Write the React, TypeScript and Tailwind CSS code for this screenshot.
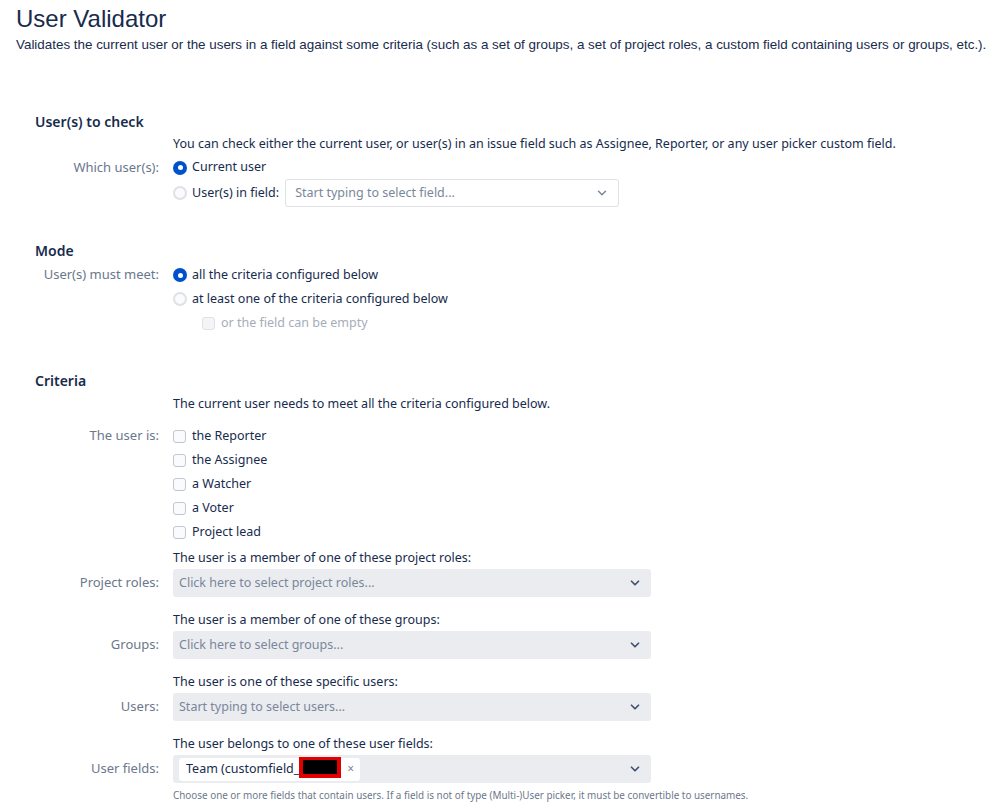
import { ChevronDown } from 'lucide-react';

const body = { fontFamily: '"Noto Sans", "Open Sans", sans-serif' };

function Radio({ checked, label }: { checked?: boolean; label: string }) {
  return (
    <label className="flex items-center gap-[5px] text-[12.5px] text-[#172b4d]">
      {checked ? (
        <span className="w-[14px] h-[14px] rounded-full bg-[#0052cc] flex items-center justify-center">
          <span className="w-[5px] h-[5px] rounded-full bg-white" />
        </span>
      ) : (
        <span className="w-[14px] h-[14px] rounded-full border-2 border-[#dfe1e6] bg-[#fafbfc]" />
      )}
      <span>{label}</span>
    </label>
  );
}

function Checkbox({ label, disabled }: { label: string; disabled?: boolean }) {
  return (
    <label className={`flex items-center gap-[6px] text-[12.5px] ${disabled ? 'text-[#a5adba]' : 'text-[#172b4d]'}`}>
      <span className={`w-[13px] h-[13px] rounded-[3px] border ${disabled ? 'border-[#dfe1e6] bg-[#f4f5f7]' : 'border-[#c1c7d0] bg-[#fafbfc]'}`} />
      <span>{label}</span>
    </label>
  );
}

function Row({ label, children, h = 'h-[24px]' }: { label?: string; children: React.ReactNode; h?: string }) {
  return (
    <div className={`flex items-center ${h}`}>
      <div className="w-[124px] text-right text-[13px] text-[#6b778c] shrink-0">{label}</div>
      <div className="ml-[14px] flex items-center">{children}</div>
    </div>
  );
}

function GreySelect({ placeholder, children }: { placeholder?: string; children?: React.ReactNode }) {
  return (
    <div className="w-[478px] h-[28px] rounded-[3px] bg-[#ebecf0] flex items-center pl-[6px] pr-[9px]">
      <div className="flex-1 flex items-center text-[12.5px] text-[#7a869a]">{children ?? placeholder}</div>
      <ChevronDown size={14} strokeWidth={3} className="text-[#42526e]" />
    </div>
  );
}

function FieldGroup({ desc, label, children, first }: { desc: string; label: string; children: React.ReactNode; first?: boolean }) {
  return (
    <div className={first ? 'mt-[3px]' : 'mt-[12px]'}>
      <Row h="h-[22px]">
        <span className="text-[12.5px] text-[#172b4d]">{desc}</span>
      </Row>
      <Row label={label} h="h-[28px]">
        {children}
      </Row>
    </div>
  );
}

function Header({ children, className = '' }: { children: React.ReactNode; className?: string }) {
  return <div className={`h-[24px] flex items-center text-[14px] font-semibold text-[#172b4d] ${className}`}>{children}</div>;
}

export default function App() {
  return (
    <div className="bg-white min-h-[811px] w-[998px] overflow-hidden">
      <div className="pl-[16px] pt-[5px]" style={{ fontFamily: '"Liberation Sans", Arial, sans-serif' }}>
        <h1 className="text-[24px] leading-[28px] text-[#172b4d]">User Validator</h1>
        <p className="text-[13.4px] leading-[18px] mt-[3px] text-[#172b4d] whitespace-nowrap">
          Validates the current user or the users in a field against some criteria (such as a set of groups, a set of project roles, a custom field containing users or groups, etc.).
        </p>
      </div>

      <div className="pl-[35px] mt-[55px]" style={body}>
        <Header>User(s) to check</Header>
        <Row h="h-[23px]">
          <span className="text-[12.5px] text-[#172b4d]">
            You can check either the current user, or user(s) in an issue field such as Assignee, Reporter, or any user picker custom field.
          </span>
        </Row>
        <Row label="Which user(s):" h="h-[23px]">
          <Radio checked label="Current user" />
        </Row>
        <Row h="h-[28px]">
          <Radio label="User(s) in field:" />
          <div className="ml-[6px] w-[334px] h-[28px] rounded-[3px] border border-[#dfe1e6] bg-white flex items-center pl-[9px] pr-[9px]">
            <span className="flex-1 text-[12.5px] text-[#7a869a]">Start typing to select field...</span>
            <ChevronDown size={14} strokeWidth={2.5} className="text-[#7a869a]" />
          </div>
        </Row>

        <Header className="mt-[31px]">Mode</Header>
        <div className="mt-px">
          <Row label="User(s) must meet:">
            <Radio checked label="all the criteria configured below" />
          </Row>
          <Row>
            <Radio label="at least one of the criteria configured below" />
          </Row>
          <Row>
            <div className="ml-[29px]">
              <Checkbox disabled label="or the field can be empty" />
            </div>
          </Row>
        </div>

        <Header className="mt-[33px]">Criteria</Header>
        <Row>
          <span className="text-[12.5px] text-[#172b4d]">The current user needs to meet all the criteria configured below.</span>
        </Row>
        <div className="mt-[8px]">
          <Row label="The user is:">
            <Checkbox label="the Reporter" />
          </Row>
          <Row>
            <Checkbox label="the Assignee" />
          </Row>
          <Row>
            <Checkbox label="a Watcher" />
          </Row>
          <Row>
            <Checkbox label="a Voter" />
          </Row>
          <Row>
            <Checkbox label="Project lead" />
          </Row>
        </div>

        <FieldGroup first desc="The user is a member of one of these project roles:" label="Project roles:">
          <GreySelect placeholder="Click here to select project roles..." />
        </FieldGroup>
        <FieldGroup desc="The user is a member of one of these groups:" label="Groups:">
          <GreySelect placeholder="Click here to select groups..." />
        </FieldGroup>
        <FieldGroup desc="The user is one of these specific users:" label="Users:">
          <GreySelect placeholder="Start typing to select users..." />
        </FieldGroup>
        <FieldGroup desc="The user belongs to one of these user fields:" label="User fields:">
          <GreySelect>
            <span className="h-[23px] bg-white rounded-[3px] flex items-center pl-[7px] pr-[6px] text-[#172b4d]">
              Team (customfield_
              <span className="w-[42px] h-[21px] bg-[#e00000] flex items-center justify-center -mt-[4px]">
                <span className="w-[34px] h-[14px] bg-black" />
              </span>
              <span className="ml-[6px] text-[12px] text-[#7a869a]">×</span>
            </span>
          </GreySelect>
        </FieldGroup>
        <Row h="h-[24px]">
          <span className="text-[9.9px] text-[#6b778c]">
            Choose one or more fields that contain users. If a field is not of type (Multi-)User picker, it must be convertible to usernames.
          </span>
        </Row>
      </div>
    </div>
  );
}
